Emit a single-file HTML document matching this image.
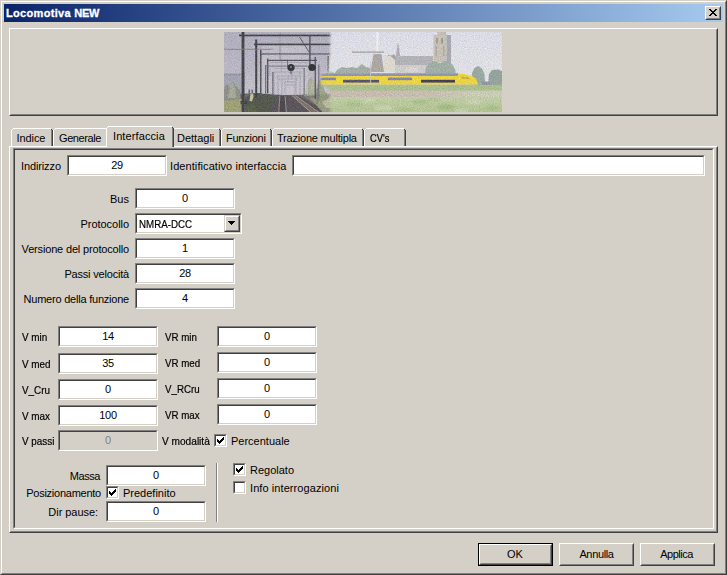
<!DOCTYPE html>
<html lang="it">
<head>
<meta charset="utf-8">
<title>Locomotiva NEW</title>
<style>
html,body{margin:0;padding:0;}
body{width:727px;height:575px;overflow:hidden;position:relative;background:#d4d0c8;
  font-family:"Liberation Sans",sans-serif;font-size:11px;color:#000;line-height:13px;}
.abs{position:absolute;box-sizing:border-box;}
/* window frame */
#w1{left:0;top:0;width:727px;height:575px;border:1px solid;border-color:#d4d0c8 #404040 #404040 #d4d0c8;}
#w2{left:1px;top:1px;width:725px;height:573px;border:1px solid;border-color:#fff #808080 #808080 #fff;}
#title{left:4px;top:4px;width:719px;height:18px;background:linear-gradient(to right,#0a246a,#a6caf0);}
#title i{font-style:normal;letter-spacing:-0.35px;}
#title span{position:absolute;left:2px;top:2px;letter-spacing:0.32px;-webkit-text-stroke:0.3px #fff;color:#fff;font-weight:bold;font-size:11px;line-height:14px;white-space:nowrap;}
.raised{border:1px solid;border-color:#fff #404040 #404040 #fff;}
.raised:before{content:"";position:absolute;left:0;top:0;right:0;bottom:0;border:1px solid;border-color:#d4d0c8 #808080 #808080 #d4d0c8;}
#close{left:705px;top:6px;width:16px;height:14px;background:#d4d0c8;}
.sbtn{background:#d4d0c8;border:1px solid;border-color:#d4d0c8 #404040 #404040 #d4d0c8;}
.sbtn:before{content:"";position:absolute;left:0;top:0;right:0;bottom:0;border:1px solid;border-color:#fff #808080 #808080 #fff;}
/* sunken edit */
.edit{height:21px;background:#fff;border:1px solid;border-color:#808080 #fff #fff #808080;text-align:center;}
.edit:before{content:"";position:absolute;left:0;top:0;right:0;bottom:0;border:1px solid;border-color:#404040 #d4d0c8 #d4d0c8 #404040;}
.edit span{position:absolute;left:0;right:0;top:3px;line-height:13px;letter-spacing:-0.3px;}
.edit.dis{background:#d4d0c8;color:#808080;}
.lbl{white-space:nowrap;line-height:13px;}
.r{text-align:right;}
.chk{width:13px;height:13px;background:#fff;border:1px solid;border-color:#808080 #fff #fff #808080;}
.chk:before{content:"";position:absolute;left:0;top:0;right:0;bottom:0;border:1px solid;border-color:#404040 #d4d0c8 #d4d0c8 #404040;}
.chk svg{position:absolute;left:2px;top:2px;}
/* tabs */
.tl{white-space:nowrap;line-height:13px;z-index:4;}
.btn{height:23px;background:#d4d0c8;text-align:center;}
.btn span{position:absolute;left:0;right:0;top:4px;line-height:13px;}
</style>
</head>
<body>
<div id="w1" class="abs"></div>
<div id="w2" class="abs"></div>
<div id="title" class="abs"><span>Locomotiva <i>NEW</i></span></div>
<div id="close" class="abs raised"><svg class="abs" style="left:3px;top:2px" width="8" height="7" viewBox="0 0 8 7"><path d="M0 0h2v1h-2zM6 0h2v1h-2zM1 1h2v1h-2zM5 1h2v1h-2zM2 2h2v1h-2zM4 2h2v1h-2zM3 3h2v1h-2zM3 3h2v1h-2zM4 4h2v1h-2zM2 4h2v1h-2zM5 5h2v1h-2zM1 5h2v1h-2zM6 6h2v1h-2zM0 6h2v1h-2z" fill="#000" shape-rendering="crispEdges"/></svg></div>

<!-- image panel -->
<div class="abs raised" style="left:9px;top:28px;width:709px;height:88px;"></div>
<svg class="abs" id="photo" style="left:224px;top:32px" width="278" height="80" viewBox="0 0 278 80">
<defs>
<linearGradient id="sky1" x1="0" y1="0" x2="0" y2="1"><stop offset="0" stop-color="#b0aebc"/><stop offset="0.5" stop-color="#bab7c4"/><stop offset="0.78" stop-color="#c6c2cb"/></linearGradient>
<linearGradient id="sky2" x1="0" y1="0" x2="0" y2="1"><stop offset="0" stop-color="#dadbe5"/><stop offset="0.5" stop-color="#dfdfe4"/></linearGradient>
<linearGradient id="grass" x1="0" y1="0" x2="0" y2="1"><stop offset="0" stop-color="#c0cca6"/><stop offset="1" stop-color="#aec18d"/></linearGradient>
<linearGradient id="band" x1="0" y1="0" x2="1" y2="0"><stop offset="0" stop-color="#c6b9b0"/><stop offset="0.6" stop-color="#c7bdb1"/><stop offset="0.85" stop-color="#c8ccb6"/></linearGradient>
<filter id="b1" x="-5%" y="-5%" width="110%" height="110%"><feGaussianBlur stdDeviation="0.55"/></filter>
<filter id="b2" x="-5%" y="-5%" width="110%" height="110%"><feGaussianBlur stdDeviation="1.3"/></filter>
<filter id="bm" x="-5%" y="-5%" width="110%" height="110%"><feGaussianBlur stdDeviation="1.1"/></filter>
<filter id="noise" x="0" y="0" width="100%" height="100%" color-interpolation-filters="sRGB"><feTurbulence type="fractalNoise" baseFrequency="0.85" numOctaves="2" seed="7" result="t"/><feColorMatrix in="t" type="matrix" values="0.5 0.25 0.25 0 0  0.25 0.5 0.25 0 0  0.25 0.25 0.5 0 0  0 0 0 0 1" result="n"/><feComposite in="SourceGraphic" in2="n" operator="arithmetic" k1="0" k2="1" k3="0.34" k4="-0.17"/></filter>
<mask id="m1"><path d="M-5 -5 L106.5 -5 L106 24 L104.5 40 L97 42 L97 53.5 L105 56 L107 85 L-5 85z" fill="#fff" filter="url(#bm)"/></mask>
<clipPath id="cp"><rect width="278" height="80"/></clipPath>
</defs>
<g clip-path="url(#cp)"><g filter="url(#noise)">
<!-- photo 2 : windmill, church, train -->
<g filter="url(#b1)">
<rect x="88" y="-2" width="194" height="84" fill="url(#sky2)"/>
<!-- horizon trees -->
<path d="M110 42 L113 38 L118 35 L123 36 L128 35 L133 36 L138 32 L142 35 L147 36 L147 42z" fill="#a3aea6"/>
<path d="M100 42 L104 39 L110 40 L110 42z" fill="#c3c8c6"/>
<!-- windmill -->
<path d="M152.4 -1 L154.4 -1 L154 21 L152.6 21z" fill="#f0f0ec"/>
<rect x="128" y="19.4" width="32" height="1.5" fill="#a9a9ab"/>
<path d="M149.5 22 L157.5 22 L160 40 L146.5 40z" fill="#aca7a3"/>
<!-- white house -->
<path d="M160 40 L160 27 L165 22.5 L171 27 L171 40z" fill="#dcd8ce"/>
<path d="M163 24.5 L170 22.5 L175 27.5 L171 28 L165 22.5z" fill="#a3a3a9"/>
<!-- small spire -->
<path d="M173.7 11 L174.3 11 L176 24 L172 24z" fill="#adadb5"/>
<!-- church nave -->
<rect x="171" y="24" width="38" height="10" fill="#b2b2b7"/>
<rect x="171" y="33" width="38" height="8.5" fill="#cdcbca"/>
<rect x="182" y="35" width="12" height="5" fill="#d8d2d0"/>
<!-- tower -->
<rect x="213.5" y="-1" width="8.5" height="5" fill="#c1bbb4"/>
<rect x="209.5" y="3" width="13" height="27" fill="#c8c0b5"/>
<rect x="222.5" y="3" width="4.5" height="28" fill="#a8a8b0"/>
<rect x="212" y="6" width="2" height="5.5" fill="#a19b95"/><rect x="217" y="6" width="2" height="5.5" fill="#a19b95"/>
<rect x="211.5" y="14" width="1.5" height="10" fill="#b0a9a0"/><rect x="219" y="14" width="1.5" height="10" fill="#b0a9a0"/>
<!-- trees at tower base -->
<path d="M201 42 L202 35 L206 31 L210 29 L216 31 L222 28.5 L228 32 L231 37 L232 42z" fill="#a0aea6"/>
<!-- trees right -->
<path d="M247 54 L248 41 L250.5 36 L254 34 L258 36.5 L260.5 42 L261 54z" fill="#99a8a0"/>
<path d="M264 54 L265 42 L268 38 L274 37.5 L279 39.5 L279 54z" fill="#93a49e"/>
<rect x="258" y="49.5" width="8" height="3.5" fill="#8f96a4"/>
<!-- train -->
<path d="M94 41.2 L234 41.2 Q246 42 252 46.5 Q254 49.5 253 52.6 L94 52.6z" fill="#ebd440"/>
<rect x="94" y="41.3" width="140" height="2.7" fill="#9193b4"/>
<rect x="96" y="45.6" width="16" height="2.6" fill="#8485ad"/>
<rect x="119" y="47.8" width="36" height="2.8" fill="#55557a"/>
<rect x="164" y="45.6" width="24" height="2.6" fill="#8485ad"/>
<rect x="197" y="47.8" width="34" height="2.8" fill="#43435c"/>
<path d="M237 44.2 L244 45.2 L247 47.2 L238 46.8z" fill="#c9b040"/>
<rect x="94" y="51" width="160" height="1.8" fill="#dccf7c"/>
<!-- pole in front of train -->
<rect x="146.2" y="30" width="0.9" height="21" fill="#c6c6c6"/>
<!-- fields -->
<rect x="88" y="52.8" width="194" height="6.4" fill="#abbe8e"/>
<rect x="88" y="58.6" width="194" height="7" fill="url(#band)"/>
<rect x="88" y="65" width="194" height="17" fill="url(#grass)"/>
</g>
<g filter="url(#b2)" opacity="0.6">
<ellipse cx="130" cy="72" rx="9" ry="2.6" fill="#a3b884"/><ellipse cx="160" cy="76" rx="10" ry="2.6" fill="#d0d9c0"/><ellipse cx="196" cy="70" rx="8" ry="2.6" fill="#9fb67c"/><ellipse cx="222" cy="75" rx="9" ry="3" fill="#98b274"/><ellipse cx="250" cy="70" rx="8" ry="2.6" fill="#cfd7bf"/><ellipse cx="268" cy="76" rx="7" ry="2.6" fill="#a0b880"/><ellipse cx="180" cy="78" rx="8" ry="2.2" fill="#a0b880"/><ellipse cx="238" cy="79" rx="7" ry="2" fill="#cfd7bf"/><ellipse cx="145" cy="68" rx="7" ry="2" fill="#cfd7bf"/><ellipse cx="210" cy="67.5" rx="7" ry="1.8" fill="#a6ba88"/>
</g>
<!-- photo 1 : catenary / tracks -->
<g mask="url(#m1)">
<g filter="url(#b1)">
<rect x="-2" y="-2" width="118" height="84" fill="url(#sky1)"/>
<!-- distant building -->
<rect x="-1" y="42" width="22" height="20" fill="#a3a3b1"/>
<rect x="-1" y="41.5" width="22" height="2" fill="#9495a8"/>
<!-- ground base -->
<path d="M-1 63 L30 61 L60 63 L114 62 L114 82 L-1 82z" fill="#6b6a6a"/>
<!-- left trees and light ground -->
<path d="M-1 58 L3 52 L6 55 L9 50 L13 55 L16 58 L17 72 L-1 72z" fill="#8e9088"/>
<path d="M4 66 L6 54 L9 50 L11 55 L12 66z" fill="#a6a898"/>
<path d="M-1 69 L18 67 L18 82 L-1 82z" fill="#9fa078"/>
<!-- dark vegetation -->
<path d="M21 82 L21 66 L26 63 L34 61 L44 62.5 L54 64 L50 82z" fill="#545a4f"/>
<path d="M25.5 69 L26.5 62 L29 61 L29.5 64.5 L28 69.5z" fill="#c4c0a4"/>
<rect x="24.6" y="57.5" width="1.2" height="4" fill="#55505a"/><rect x="27.6" y="57.5" width="1.2" height="4" fill="#55505a"/>
<path d="M21 75 L30 71 L34 82 L21 82z" fill="#5b634d"/>
<!-- track bed -->
<path d="M53 63.5 L73 63.5 L110 82 L46 82z" fill="#5b565a"/>
<path d="M56.2 64 L60.6 64 L62 82 L55 82z" fill="#4e4a50"/>
<path d="M55.8 64 L54.7 82 M61 64 L62.5 82" stroke="#9a8f93" stroke-width="1" fill="none"/>
<path d="M68 63.5 L71.5 63.5 L96 82 L88 82z" fill="#7c706c"/>
<path d="M68 63.5 L89 82 M71.5 63.5 L97 82" stroke="#aa9e9a" stroke-width="0.9" fill="none"/>
<path d="M80 64 L92 64 L112 74 L112 82 L104 82z" fill="#8a8280" opacity="0.8"/>
<path d="M99 71 L110 71.5 L110 74 L101 73.6z" fill="#b6aea2"/>
<!-- vegetation right of track -->
<path d="M80 64 L82 55 L85 47 L87.5 45 L90 50 L91 64z" fill="#a0a788" opacity="0.75"/>
<path d="M92 66 L93 52 L96 47 L99 53 L101 60 L108 64 L110 82 L100 82 L86 66z" fill="#98a07f" opacity="0.85"/>
<path d="M86 56 L89 48 L92 52 L93 60z" fill="#b4b898"/>
<path d="M98 70 L106 66 L110 70 L110 76 L102 76z" fill="#b8b8a0"/>
<rect x="38" y="14" width="46" height="48" fill="#c8c4cd" opacity="0.55"/>
<!-- hazy gantries in distance -->
<g stroke="#9f9caa" stroke-width="0.7" fill="none">
<path d="M46 30.5 H84 M60 50 H72 M62 53 H70 M61 50 V62 M71 50 V62 M64 44 V50 M68 40 V47 M57.5 29 V40 M46 36 V44"/>
<path d="M50 40 V62 M54 44 V62 M58 47 V62 M76 40 V62 M72 44 V62 M50 40 H78 M52 44 H76 M54 47 H74 M50 36.5 H80"/>
</g>
<rect x="55" y="-1" width="2.2" height="30" fill="#a9a6b4"/>
<!-- poles -->
<g fill="#45444c">
<rect x="17.6" y="-1" width="2.8" height="83"/>
<rect x="15" y="2.6" width="100" height="1.7"/>
<rect x="31.2" y="7.5" width="2" height="58"/>
<rect x="30" y="11.6" width="86" height="1.6"/>
</g>
<g fill="#55545d">
<rect x="36" y="18" width="1.5" height="49"/>
<rect x="36" y="21.4" width="80" height="1.1"/>
<rect x="43" y="26.5" width="1.4" height="35"/>
<rect x="43" y="27.8" width="50" height="1.2"/>
<rect x="85.2" y="3" width="1.4" height="30"/>
<rect x="90.6" y="25" width="1.3" height="42"/>
<rect x="103.6" y="24" width="1.2" height="17"/>
</g>
<g fill="#74727d">
<rect x="41" y="33" width="1.3" height="29"/>
<rect x="41" y="33.6" width="45" height="1"/>
<rect x="48.2" y="40" width="1.3" height="23"/>
<rect x="79.6" y="36" width="1.1" height="27"/>
<rect x="94.2" y="32.5" width="1.2" height="36"/>
<rect x="92.6" y="56" width="1" height="16"/>
<rect x="63" y="29" width="1" height="5"/>
</g>
<rect x="-1" y="16.8" width="50" height="0.9" fill="#85828e"/>
<path d="M75.5 5 L85 20" stroke="#54535c" stroke-width="0.9"/>
<!-- signals -->
<circle cx="67" cy="35.5" r="3.6" fill="#34343a"/><circle cx="67" cy="35" r="1.2" fill="#6a7a72"/>
<circle cx="88" cy="35.5" r="3.6" fill="#34343a"/>
<rect x="66.5" y="38" width="1" height="4" fill="#45444c"/>
<!-- base of first pole -->
<rect x="16.6" y="69" width="7" height="3" fill="#47464c"/>
</g>
</g>
</g></g>
</svg>

<!-- tab pane -->
<div class="abs raised" style="left:9px;top:146px;width:709px;height:387px;"></div>
<div class="abs" id="inner" style="left:13px;top:148px;width:701px;height:381px;border:1px solid;border-color:#808080 #fff #fff #808080;"></div>
<div class="abs" style="left:14px;top:149px;width:699px;height:379px;border:1px solid;border-color:#404040 #d4d0c8 #d4d0c8 #404040;"></div>

<!-- tabs -->
<svg class="abs" style="left:0;top:0;z-index:2" width="727" height="150" viewBox="0 0 727 150" shape-rendering="crispEdges">
<rect x="11" y="130" width="1" height="16" fill="#fff"/>
<rect x="12" y="129" width="1" height="1" fill="#fff"/>
<rect x="13" y="128" width="38" height="1" fill="#fff"/>
<rect x="51" y="129" width="1" height="1" fill="#404040"/>
<rect x="51" y="130" width="1" height="16" fill="#808080"/>
<rect x="52" y="130" width="1" height="16" fill="#404040"/>
<rect x="53" y="130" width="1" height="16" fill="#fff"/>
<rect x="54" y="129" width="1" height="1" fill="#fff"/>
<rect x="55" y="128" width="51" height="1" fill="#fff"/>
<rect x="106" y="129" width="1" height="1" fill="#404040"/>
<rect x="106" y="130" width="1" height="16" fill="#808080"/>
<rect x="107" y="130" width="1" height="16" fill="#404040"/>
<rect x="172" y="130" width="1" height="16" fill="#fff"/>
<rect x="173" y="129" width="1" height="1" fill="#fff"/>
<rect x="174" y="128" width="45" height="1" fill="#fff"/>
<rect x="219" y="129" width="1" height="1" fill="#404040"/>
<rect x="219" y="130" width="1" height="16" fill="#808080"/>
<rect x="220" y="130" width="1" height="16" fill="#404040"/>
<rect x="221" y="130" width="1" height="16" fill="#fff"/>
<rect x="222" y="129" width="1" height="1" fill="#fff"/>
<rect x="223" y="128" width="47" height="1" fill="#fff"/>
<rect x="270" y="129" width="1" height="1" fill="#404040"/>
<rect x="270" y="130" width="1" height="16" fill="#808080"/>
<rect x="271" y="130" width="1" height="16" fill="#404040"/>
<rect x="272" y="130" width="1" height="16" fill="#fff"/>
<rect x="273" y="129" width="1" height="1" fill="#fff"/>
<rect x="274" y="128" width="88" height="1" fill="#fff"/>
<rect x="362" y="129" width="1" height="1" fill="#404040"/>
<rect x="362" y="130" width="1" height="16" fill="#808080"/>
<rect x="363" y="130" width="1" height="16" fill="#404040"/>
<rect x="364" y="130" width="1" height="16" fill="#fff"/>
<rect x="365" y="129" width="1" height="1" fill="#fff"/>
<rect x="366" y="128" width="38" height="1" fill="#fff"/>
<rect x="404" y="129" width="1" height="1" fill="#404040"/>
<rect x="404" y="130" width="1" height="16" fill="#808080"/>
<rect x="405" y="130" width="1" height="16" fill="#404040"/>
<rect x="106" y="126" width="68" height="22" fill="#d4d0c8"/>
<rect x="106" y="128" width="1" height="19" fill="#fff"/>
<rect x="107" y="127" width="1" height="1" fill="#fff"/>
<rect x="108" y="126" width="64" height="1" fill="#fff"/>
<rect x="172" y="127" width="1" height="1" fill="#404040"/>
<rect x="172" y="128" width="1" height="19" fill="#808080"/>
<rect x="173" y="128" width="1" height="19" fill="#404040"/>
</svg>
<div class="abs tl" style="left:16.6px;top:132px;letter-spacing:-0.1px;">Indice</div>
<div class="abs tl" style="left:59px;top:132px;letter-spacing:-0.4px;">Generale</div>
<div class="abs tl" style="left:113px;top:130px;letter-spacing:0.1px;">Interfaccia</div>
<div class="abs tl" style="left:177px;top:132px;">Dettagli</div>
<div class="abs tl" style="left:226px;top:132px;letter-spacing:-0.25px;">Funzioni</div>
<div class="abs tl" style="left:277px;top:132px;letter-spacing:-0.21px;">Trazione multipla</div>
<div class="abs tl" style="left:370px;top:132px;transform:scaleX(0.85);transform-origin:0 0;-webkit-text-stroke:0.2px #000;">CV's</div>

<!-- row 1 -->
<div class="abs lbl" style="left:21px;top:160px;letter-spacing:-0.12px;">Indirizzo</div>
<div class="abs edit" style="left:67px;top:155px;width:100px;"><span>29</span></div>
<div class="abs lbl" style="left:170px;top:160px;letter-spacing:0.08px;">Identificativo interfaccia</div>
<div class="abs edit" style="left:292px;top:155px;width:413px;"><span></span></div>

<!-- block 2 -->
<div class="abs lbl" style="right:598px;top:193px;">Bus</div>
<div class="abs edit" style="left:135px;top:188px;width:100px;"><span>0</span></div>
<div class="abs lbl" style="right:598px;top:218px;letter-spacing:-0.05px;">Protocollo</div>
<div class="abs edit" style="left:135px;top:213px;width:107px;text-align:left;"><span style="left:2.6px;top:4px;right:auto;letter-spacing:0;transform:scaleX(0.885);transform-origin:0 0;-webkit-text-stroke:0.2px #000;">NMRA-DCC</span>
  <div class="abs sbtn" style="left:88px;top:1px;width:16px;height:17px;"><svg class="abs" style="left:3px;top:5px" width="7" height="4" viewBox="0 0 7 4"><path d="M0 0H7V1H0zM1 1H6V2H1zM2 2H5V3H2zM3 3H4V4H3z" fill="#000" shape-rendering="crispEdges"/></svg></div>
</div>
<div class="abs lbl" style="right:598px;top:243px;letter-spacing:-0.17px;">Versione del protocollo</div>
<div class="abs edit" style="left:135px;top:238px;width:100px;"><span>1</span></div>
<div class="abs lbl" style="right:598px;top:268px;letter-spacing:-0.19px;">Passi velocità</div>
<div class="abs edit" style="left:135px;top:263px;width:100px;"><span>28</span></div>
<div class="abs lbl" style="right:598px;top:293px;letter-spacing:-0.22px;">Numero della funzione</div>
<div class="abs edit" style="left:135px;top:288px;width:100px;"><span>4</span></div>

<!-- V block -->
<div class="abs lbl" style="left:22px;top:331px;transform:scaleX(0.9);transform-origin:0 0;-webkit-text-stroke:0.2px #000;">V min</div>
<div class="abs edit" style="left:58px;top:326px;width:100px;"><span>14</span></div>
<div class="abs lbl" style="left:165px;top:331px;transform:scaleX(0.885);transform-origin:0 0;-webkit-text-stroke:0.2px #000;">VR min</div>
<div class="abs edit" style="left:217px;top:326px;width:100px;"><span>0</span></div>
<div class="abs lbl" style="left:22px;top:358px;transform:scaleX(0.9);transform-origin:0 0;-webkit-text-stroke:0.2px #000;">V med</div>
<div class="abs edit" style="left:58px;top:353px;width:100px;"><span>35</span></div>
<div class="abs lbl" style="left:165px;top:357px;transform:scaleX(0.885);transform-origin:0 0;-webkit-text-stroke:0.2px #000;">VR med</div>
<div class="abs edit" style="left:217px;top:352px;width:100px;"><span>0</span></div>
<div class="abs lbl" style="left:22px;top:384px;transform:scaleX(0.9);transform-origin:0 0;-webkit-text-stroke:0.2px #000;">V_Cru</div>
<div class="abs edit" style="left:58px;top:379px;width:100px;"><span>0</span></div>
<div class="abs lbl" style="left:165px;top:383px;transform:scaleX(0.885);transform-origin:0 0;-webkit-text-stroke:0.2px #000;">V_RCru</div>
<div class="abs edit" style="left:217px;top:378px;width:100px;"><span>0</span></div>
<div class="abs lbl" style="left:22px;top:410px;transform:scaleX(0.9);transform-origin:0 0;-webkit-text-stroke:0.2px #000;">V max</div>
<div class="abs edit" style="left:58px;top:405px;width:100px;"><span>100</span></div>
<div class="abs lbl" style="left:165px;top:409px;transform:scaleX(0.885);transform-origin:0 0;-webkit-text-stroke:0.2px #000;">VR max</div>
<div class="abs edit" style="left:217px;top:404px;width:100px;"><span>0</span></div>
<div class="abs lbl" style="left:22px;top:435px;transform:scaleX(0.9);transform-origin:0 0;-webkit-text-stroke:0.2px #000;">V passi</div>
<div class="abs edit dis" style="left:58px;top:430px;width:100px;"><span>0</span></div>
<div class="abs lbl" style="left:162px;top:435px;transform:scaleX(0.92);transform-origin:0 0;-webkit-text-stroke:0.2px #000;">V modalità</div>
<div class="abs chk" style="left:214px;top:434px;"><svg width="7" height="7" viewBox="0 0 7 7"><path d="M0 2h1v3h-1zM1 3h1v3h-1zM2 4h1v3h-1zM3 3h1v3h-1zM4 2h1v3h-1zM5 1h1v3h-1zM6 0h1v3h-1z" fill="#000" shape-rendering="crispEdges"/></svg></div>
<div class="abs lbl" style="left:231px;top:435px;">Percentuale</div>

<!-- bottom block -->
<div class="abs lbl" style="right:627px;top:470px;letter-spacing:-0.45px;">Massa</div>
<div class="abs edit" style="left:106px;top:465px;width:100px;"><span>0</span></div>
<div class="abs lbl" style="right:626px;top:487px;letter-spacing:-0.25px;">Posizionamento</div>
<div class="abs chk" style="left:106px;top:486px;"><svg width="7" height="7" viewBox="0 0 7 7"><path d="M0 2h1v3h-1zM1 3h1v3h-1zM2 4h1v3h-1zM3 3h1v3h-1zM4 2h1v3h-1zM5 1h1v3h-1zM6 0h1v3h-1z" fill="#000" shape-rendering="crispEdges"/></svg></div>
<div class="abs lbl" style="left:123px;top:487px;">Predefinito</div>
<div class="abs lbl" style="right:629px;top:506px;letter-spacing:-0.05px;">Dir pause:</div>
<div class="abs edit" style="left:106px;top:501px;width:100px;"><span>0</span></div>

<div class="abs" style="left:216px;top:463px;width:1px;height:59px;background:#808080;"></div>
<div class="abs" style="left:217px;top:463px;width:1px;height:59px;background:#fff;"></div>

<div class="abs chk" style="left:233px;top:463px;"><svg width="7" height="7" viewBox="0 0 7 7"><path d="M0 2h1v3h-1zM1 3h1v3h-1zM2 4h1v3h-1zM3 3h1v3h-1zM4 2h1v3h-1zM5 1h1v3h-1zM6 0h1v3h-1z" fill="#000" shape-rendering="crispEdges"/></svg></div>
<div class="abs lbl" style="left:250px;top:464px;">Regolato</div>
<div class="abs chk" style="left:233px;top:481px;"></div>
<div class="abs lbl" style="left:250px;top:482px;letter-spacing:0.08px;">Info interrogazioni</div>

<!-- buttons -->
<div class="abs" style="left:478px;top:543px;width:75px;height:23px;background:#000;"></div>
<div class="abs btn raised" style="left:479px;top:544px;width:73px;height:21px;"><span style="top:3px;left:-1px">OK</span></div>
<div class="abs btn raised" style="left:559px;top:543px;width:75px;"><span style="letter-spacing:-0.35px">Annulla</span></div>
<div class="abs btn raised" style="left:640px;top:543px;width:75px;"><span style="letter-spacing:-0.5px;left:-2px">Applica</span></div>
</body>
</html>
